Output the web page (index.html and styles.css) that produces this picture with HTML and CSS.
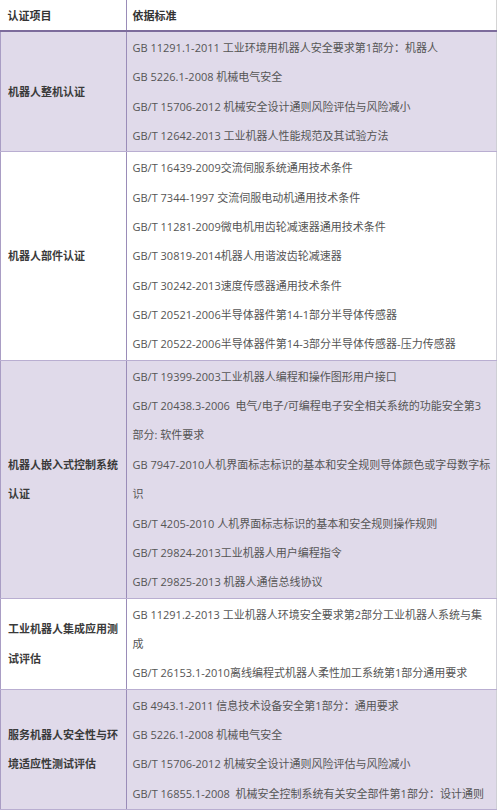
FILE: index.html
```html
<!DOCTYPE html>
<html lang="zh-CN">
<head>
<meta charset="utf-8">
<title>机器人认证</title>
<link rel="stylesheet" href="styles.css">
</head>
<body>
<table class="cert">
  <thead>
    <tr>
      <th class="col-item">认证项目</th>
      <th class="col-std">依据标准</th>
    </tr>
  </thead>
  <tbody>
    <tr class="alt">
      <td class="item">机器人整机认证</td>
      <td class="std">
        <div>GB 11291.1-2011 工业环境用机器人安全要求第1部分：机器人</div>
        <div>GB 5226.1-2008 机械电气安全</div>
        <div>GB/T 15706-2012 机械安全设计通则风险评估与风险减小</div>
        <div>GB/T 12642-2013 工业机器人性能规范及其试验方法</div>
      </td>
    </tr>
    <tr>
      <td class="item">机器人部件认证</td>
      <td class="std">
        <div>GB/T 16439-2009交流伺服系统通用技术条件</div>
        <div>GB/T 7344-1997 交流伺服电动机通用技术条件</div>
        <div>GB/T 11281-2009微电机用齿轮减速器通用技术条件</div>
        <div>GB/T 30819-2014机器人用谐波齿轮减速器</div>
        <div>GB/T 30242-2013速度传感器通用技术条件</div>
        <div>GB/T 20521-2006半导体器件第14-1部分半导体传感器</div>
        <div>GB/T 20522-2006半导体器件第14-3部分半导体传感器-压力传感器</div>
      </td>
    </tr>
    <tr class="alt">
      <td class="item">机器人嵌入式控制系统认证</td>
      <td class="std">
        <div>GB/T 19399-2003工业机器人编程和操作图形用户接口</div>
        <div>GB/T 20438.3-2006&nbsp; 电气/电子/可编程电子安全相关系统的功能安全第3<br>部分: 软件要求</div>
        <div>GB 7947-2010人机界面标志标识的基本和安全规则导体颜色或字母数字标<br>识</div>
        <div>GB/T 4205-2010 人机界面标志标识的基本和安全规则操作规则</div>
        <div>GB/T 29824-2013工业机器人用户编程指令</div>
        <div>GB/T 29825-2013 机器人通信总线协议</div>
      </td>
    </tr>
    <tr>
      <td class="item">工业机器人集成应用测试评估</td>
      <td class="std">
        <div>GB 11291.2-2013 工业机器人环境安全要求第2部分工业机器人系统与集<br>成</div>
        <div>GB/T 26153.1-2010离线编程式机器人柔性加工系统第1部分通用要求</div>
      </td>
    </tr>
    <tr class="alt">
      <td class="item">服务机器人安全性与环境适应性测试评估</td>
      <td class="std">
        <div>GB 4943.1-2011 信息技术设备安全第1部分：通用要求</div>
        <div>GB 5226.1-2008 机械电气安全</div>
        <div>GB/T 15706-2012 机械安全设计通则风险评估与风险减小</div>
        <div>GB/T 16855.1-2008&nbsp; 机械安全控制系统有关安全部件第1部分：设计通则</div>
      </td>
    </tr>
  </tbody>
</table>
</body>
</html>
```

FILE: styles.css
```css
html, body {
  margin: 0;
  padding: 0;
  background: #ffffff;
}

body {
  font-family: "Open Sans", "Noto Sans CJK SC", sans-serif;
  font-size: 11px;
  color: #555555;
}

.cert {
  width: 497px;
  border-collapse: collapse;
  table-layout: fixed;
}

.cert th {
  height: 30px;
  padding: 0 4px 0 7px;
  text-align: left;
  font-weight: bold;
  color: #333333;
  border-bottom: 2px solid #7d6c9c;
  border-right: 1px solid #d4d4d4;
}

.cert th.col-item {
  width: 114px;
  border-right: 1px solid #9a8cb8;
}

.cert th.col-std {
  padding-left: 6px;
}

.cert td {
  padding: 1px 4px 1px 7px;
  line-height: 29.35px;
  border-bottom: 1px solid #b9aed1;
  vertical-align: middle;
}

.cert td.item {
  font-weight: bold;
  color: #3a3a3a;
  border-left: 1px solid #a99dc4;
  border-right: 1px solid #9a8cb8;
}

.cert td.std {
  padding-left: 6px;
  padding-right: 2px;
  border-right: 1px solid #cfcfd6;
}

.cert tr.alt td {
  background: #e0daea;
}
```
